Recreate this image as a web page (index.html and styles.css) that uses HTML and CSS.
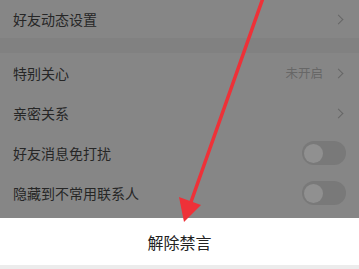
FILE: index.html
```html
<!DOCTYPE html>
<html lang="zh">
<head>
<meta charset="utf-8">
<link rel="stylesheet" href="styles.css">
</head>
<body>
<div class="page">
  <div class="list">
    <div class="row first"><span class="label">好友动态设置</span><span class="chev"></span></div>
    <div class="gap"></div>
    <div class="row"><span class="label">特别关心</span><span class="right"><span class="value">未开启</span><span class="chev"></span></span></div>
    <div class="row"><span class="label">亲密关系</span><span class="chev"></span></div>
    <div class="row"><span class="label">好友消息免打扰</span><span class="toggle"><span class="knob"></span></span></div>
    <div class="row"><span class="label">隐藏到不常用联系人</span><span class="toggle"><span class="knob"></span></span></div>
  </div>
  <div class="sheet">
    <div class="action">解除禁言</div>
    <div class="strip"></div>
  </div>
  <svg class="arrow" width="359" height="269" viewBox="0 0 359 269">
    <line x1="263" y1="-2" x2="191" y2="202" stroke="#ee3138" stroke-width="3.5" stroke-linecap="round"/>
    <polygon points="184,222 179,197 201,205" fill="#ee3138"/>
  </svg>
</div>
</body>
</html>
```

FILE: styles.css
```css
* { box-sizing: border-box; margin: 0; padding: 0; }
html, body { width: 359px; height: 269px; overflow: hidden; }
body {
  font-family: "Noto Sans CJK SC", "Noto Sans", sans-serif;
  background: #868686;
}
.page {
  position: relative;
  width: 359px;
  height: 269px;
  display: flex;
  flex-direction: column;
}
.list {
  height: 218px;
  overflow: hidden;
  display: flex;
  flex-direction: column;
}
.row {
  height: 40px;
  flex: none;
  display: flex;
  align-items: center;
  justify-content: space-between;
  padding: 0 13px 0 13px;
  background: #868686;
}
.row.first { height: 38px; }
.gap {
  height: 15px;
  flex: none;
  background: #818181;
}
.label {
  font-size: 14px;
  color: #262626;
  line-height: 1;
}
.right {
  display: flex;
  align-items: center;
  gap: 12px;
}
.value {
  font-size: 12.5px;
  color: #676767;
  line-height: 1;
}
.chev {
  width: 7px;
  height: 7px;
  border-top: 1.5px solid #666;
  border-right: 1.5px solid #666;
  transform: rotate(45deg);
  margin-right: 4px;
}
.toggle {
  width: 44px;
  height: 24px;
  border-radius: 12px;
  background: #797979;
  padding: 2px;
  display: flex;
  align-items: center;
}
.knob {
  width: 19px;
  height: 19px;
  border-radius: 50%;
  background: #909090;
}
.sheet {
  flex: 1;
  background: #ffffff;
  display: flex;
  flex-direction: column;
}
.action {
  flex: 1;
  display: flex;
  align-items: center;
  justify-content: center;
  font-size: 16px;
  color: #222;
  padding-top: 1px;
}
.strip {
  height: 4px;
  background: #ececec;
}
.arrow {
  position: absolute;
  left: 0;
  top: 0;
  pointer-events: none;
}
```
